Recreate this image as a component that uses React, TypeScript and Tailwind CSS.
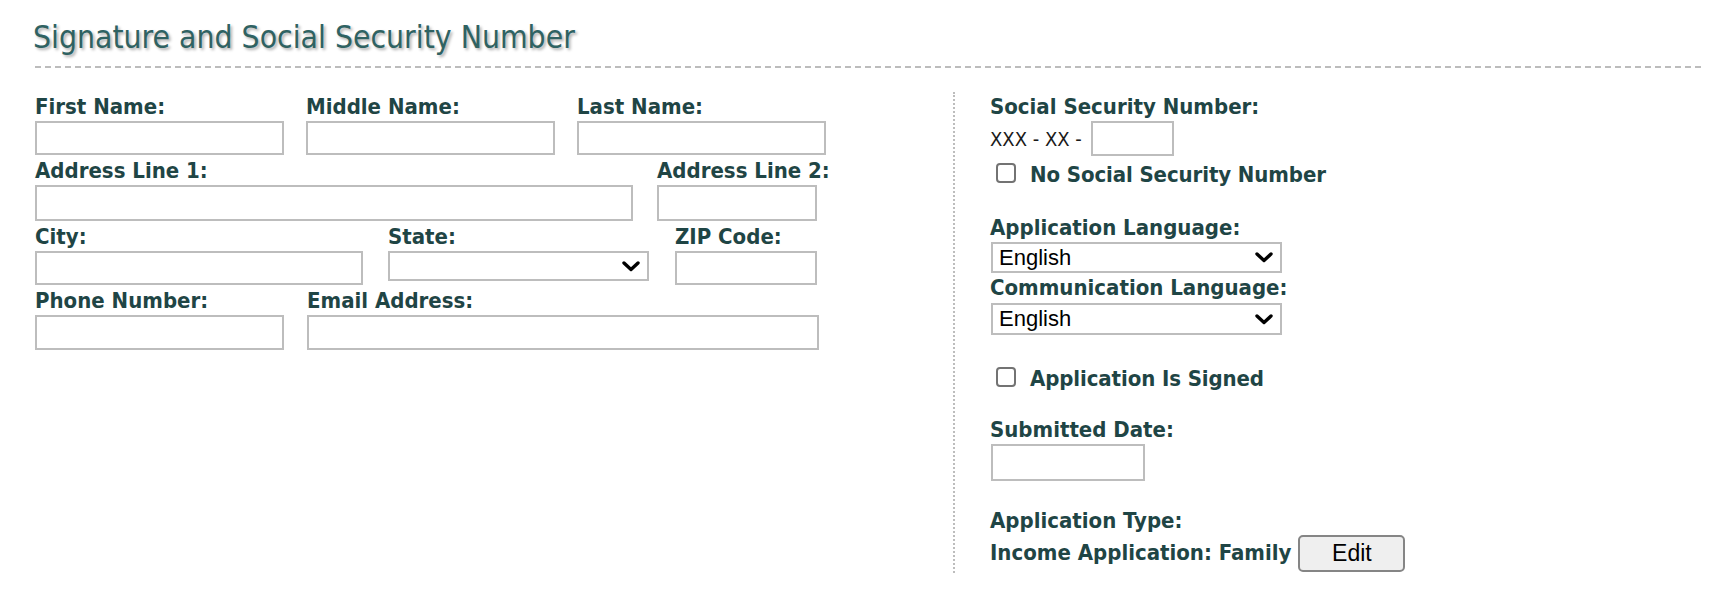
import React from "react";

const labelCls =
  "h-[27px] leading-[25px] text-[22px] font-bold text-[#1f4545] whitespace-nowrap";

function Field({
  label,
  width,
  h = 34,
}: {
  label: string;
  width: string;
  h?: number;
}) {
  return (
    <div className={`flex flex-col ${width}`}>
      <div className={labelCls}>{label}</div>
      <div
        className="w-full border-2 border-[#bdbdbd] bg-white"
        style={{ height: h }}
      />
    </div>
  );
}

function Chevron() {
  return (
    <svg width="18" height="11" viewBox="0 0 18 11" className="shrink-0">
      <polyline
        points="2,2 9,8.5 16,2"
        fill="none"
        stroke="#000"
        strokeWidth="3.4"
        strokeLinecap="round"
        strokeLinejoin="round"
      />
    </svg>
  );
}

function Select({
  text,
  width,
  h,
}: {
  text?: string;
  width: string;
  h: number;
}) {
  return (
    <div
      className={`flex items-center justify-between border-2 border-[#bdbdbd] bg-white pl-[6px] pr-[7px] ${width}`}
      style={{ height: h }}
    >
      <span className="font-['Liberation_Sans',Arial,sans-serif] text-[22px] leading-none text-black">
        {text ?? ""}
      </span>
      <Chevron />
    </div>
  );
}

function Checkbox({ label }: { label: string }) {
  return (
    <div className="flex items-start h-[27px] pl-[6px]">
      <span className="mt-[3px] w-[20px] h-[20px] rounded-[4px] border-2 border-[#737373] bg-white shrink-0" />
      <span className="ml-[14px] h-[27px] leading-[29px] text-[22px] font-bold text-[#1f4545] whitespace-nowrap tracking-[-0.1px]">
        {label}
      </span>
    </div>
  );
}

export default function App() {
  return (
    <div className="w-[1730px] h-[602px] bg-white font-['DejaVu_Sans_Condensed','DejaVu_Sans',sans-serif] overflow-hidden">
      {/* Header */}
      <div className="pt-[19px] pl-[33px]">
        <h1 className="h-[37px] leading-[37px] text-[31.6px] font-normal text-[#2f6262] [text-shadow:2px_2px_3px_rgba(0,0,0,0.32)] whitespace-nowrap">
          Signature and Social Security Number
        </h1>
      </div>
      <div className="mt-[10px] ml-[35px] mr-[28px] h-[2px] bg-[linear-gradient(to_right,#bcbcbc_6px,transparent_6px)] bg-[length:10px_2px] bg-repeat-x" />

      {/* Body */}
      <div className="mt-[24px] flex">
        {/* Left */}
        <div className="w-[953px] pl-[35px] pt-[2px] flex flex-col gap-[3px]">
          <div className="flex gap-[22px]">
            <Field label="First Name:" width="w-[249px]" />
            <Field label="Middle Name:" width="w-[249px]" />
            <Field label="Last Name:" width="w-[249px]" />
          </div>
          <div className="flex gap-[24px]">
            <Field label="Address Line 1:" width="w-[598px]" h={36} />
            <Field label="Address Line 2:" width="w-[160px]" h={36} />
          </div>
          <div className="flex items-start">
            <Field label="City:" width="w-[328px]" />
            <div className="ml-[25px] flex flex-col w-[261px]">
              <div className={labelCls}>State:</div>
              <Select width="w-full" h={30} />
            </div>
            <div className="ml-[26px]">
              <Field label="ZIP Code:" width="w-[142px]" />
            </div>
          </div>
          <div className="flex gap-[23px]">
            <Field label="Phone Number:" width="w-[249px]" h={35} />
            <Field label="Email Address:" width="w-[512px]" h={35} />
          </div>
        </div>

        {/* Right */}
        <div className="border-l-2 border-dotted border-[#bdbdbd] pl-[35px] pt-[2px] pb-[1px] flex flex-col">
          <div className={labelCls}>Social Security Number:</div>
          <div className="flex items-center h-[35px]">
            <span className="text-[20px] leading-[24px] text-[#1a1a1a] whitespace-nowrap">
              XXX - XX -
            </span>
            <div className="ml-[9px] w-[83px] h-[35px] border-2 border-[#bdbdbd] bg-white" />
          </div>
          <div className="mt-[4px]">
            <Checkbox label="No Social Security Number" />
          </div>

          <div className={`${labelCls} mt-[28px]`}>Application Language:</div>
          <Select text="English" width="w-[291px] ml-[1px]" h={31} />
          <div className={`${labelCls} mt-[2px]`}>Communication Language:</div>
          <div className="mt-[1px]">
            <Select text="English" width="w-[291px] ml-[1px]" h={32} />
          </div>

          <div className="mt-[29px]">
            <Checkbox label="Application Is Signed" />
          </div>

          <div className={`${labelCls} mt-[26px]`}>Submitted Date:</div>
          <div className="ml-[1px] w-[154px] h-[37px] border-2 border-[#bdbdbd] bg-white" />

          <div className={`${labelCls} mt-[27px] h-[26px]`}>Application Type:</div>
          <div className="flex items-center h-[37px]">
            <span className={labelCls}>Income Application: Family</span>
            <button className="ml-[7px] w-[107px] h-[37px] rounded-[5px] border-2 border-[#858585] bg-[#efefef] font-['Liberation_Sans',Arial,sans-serif] text-[23px] leading-none text-black">
              Edit
            </button>
          </div>
        </div>
      </div>
    </div>
  );
}
